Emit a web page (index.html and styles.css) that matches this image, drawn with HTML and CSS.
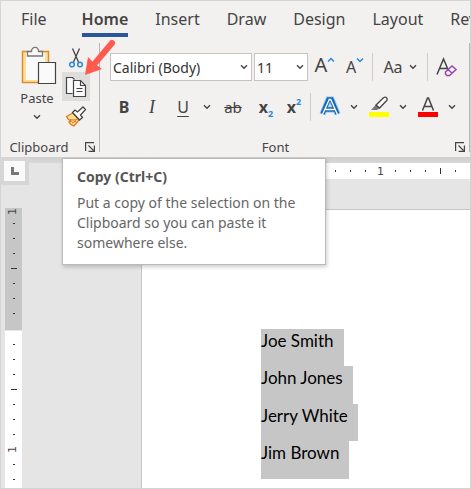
FILE: index.html
```html
<!DOCTYPE html>
<html lang="en">
  <head>
    <meta charset="UTF-8" />
    <meta name="viewport" content="width=device-width, initial-scale=1.0" />
    <title>Document - Word</title>
    <link rel="stylesheet" href="styles.css">
  </head>
  <body>
    <svg class="defs" aria-hidden="true">
      <symbol id="chevron" viewBox="0 0 8 6">
        <path d="M1 1.2 4 4.2 7 1.2" fill="none" stroke="currentColor" stroke-width="1.4" />
      </symbol>
      <symbol id="launcher" viewBox="0 0 10 10">
        <path d="M0.6 9V0.6H9M3.5 3.5l5 5M9.4 3.6v5.8H3.6" fill="none" stroke="#444" stroke-width="1.2" />
      </symbol>
    </svg>

    <div class="window">
      <nav class="tabs">
        <a href="#">File</a>
        <a href="#" class="active">Home</a>
        <a href="#">Insert</a>
        <a href="#">Draw</a>
        <a href="#">Design</a>
        <a href="#">Layout</a>
        <a href="#">Review</a>
      </nav>

      <div class="ribbon">
        <section class="group clipboard">
          <div class="clipboard-tools">
            <button class="paste">
              <svg width="42" height="40" viewBox="-5 0 42 40">
                <path d="M1.5 5.5h26v31h-26z" fill="#fbdf9b" stroke="#e08a2c" stroke-width="1.5" />
                <path d="M5 7h19v27H5z" fill="#fafafa" />
                <path d="M6.5 10V5.5h4c0-5.5 7-5.5 7 0h4V10z" fill="#fafafa" stroke="#777" stroke-width="1.3" />
                <path d="M17.5 16.5h17v21h-17z" fill="#fafafa" stroke="#444" stroke-width="1.2" />
              </svg>
              <span>Paste</span>
              <svg class="chevron" width="8" height="6"><use href="#chevron" /></svg>
            </button>
            <div class="small-tools">
              <button aria-label="Cut">
                <svg width="20" height="22" viewBox="0 0 20 22">
                  <path d="M6.5 1.5 12.5 15M13.5 1.5 7.5 15" fill="none" stroke="#444" stroke-width="1.3" />
                  <circle cx="6" cy="17.5" r="2.3" fill="none" stroke="#2b88d8" stroke-width="1.5" />
                  <circle cx="14" cy="17.5" r="2.3" fill="none" stroke="#2b88d8" stroke-width="1.5" />
                </svg>
              </button>
              <button class="hovered" aria-label="Copy" aria-describedby="copy-tip">
                <svg width="22" height="22" viewBox="0 0 22 22">
                  <path d="M7.5 17.5h-6v-16h6l2 2" fill="#fafafa" stroke="#444" stroke-width="1.2" />
                  <path d="M8.5 4.5h7l5 5v11h-12z" fill="#fafafa" stroke="#444" stroke-width="1.2" />
                  <path d="M15.5 4.5v5h5M11.5 12.5h6M11.5 15.5h6" fill="none" stroke="#444" stroke-width="1.2" />
                </svg>
              </button>
              <button aria-label="Format Painter">
                <svg width="22" height="22" viewBox="0 0 22 22">
                  <path d="M1.5 11.5 8 8l6 7-5 6q-4-1.500-5-4l2-1q-3-1-4.500-4.500z" fill="#fbdf9b" stroke="#e07b12" stroke-width="1.3" />
                  <path d="M5 14.5q4 1 7 0M7 18l4-2" fill="none" stroke="#e07b12" stroke-width="1.2" />
                  <path d="M7.5 7.5 10 5l2.5 2 5.5-5 2.5 2.5-5 5.5 2 2.5-3 2.5z" fill="#fafafa" stroke="#444" stroke-width="1.3" />
                </svg>
              </button>
            </div>
          </div>
          <div class="group-footer">
            <span>Clipboard</span>
            <button class="launcher" aria-label="Clipboard settings"><svg width="10" height="10"><use href="#launcher" /></svg></button>
          </div>
        </section>

        <section class="group font">
          <div class="font-row">
            <label class="combo combo-name">
              <select aria-label="Font"><option>Calibri (Body)</option></select>
              <svg class="chevron" width="8" height="6"><use href="#chevron" /></svg>
            </label>
            <label class="combo combo-size">
              <select aria-label="Font size"><option>11</option></select>
              <svg class="chevron" width="8" height="6"><use href="#chevron" /></svg>
            </label>
            <button class="tool grow" aria-label="Increase Font Size">A<svg width="8" height="6"><path d="M1 4.5 4 1.5 7 4.5" fill="none" stroke="#2b88d8" stroke-width="1.5" /></svg></button>
            <button class="tool shrink" aria-label="Decrease Font Size">A<svg width="8" height="6"><path d="M1 1.5 4 4.5 7 1.5" fill="none" stroke="#2b88d8" stroke-width="1.5" /></svg></button>
            <span class="divider"></span>
            <button class="tool case" aria-label="Change Case">Aa<svg class="chevron" width="8" height="6"><use href="#chevron" /></svg></button>
            <span class="divider"></span>
            <button class="tool clear" aria-label="Clear Formatting">
              <svg width="22" height="22" viewBox="0 0 22 22">
                <path d="M1 18.5 7.5 3 12 13.5M3.5 12.5h8" fill="none" stroke="#444" stroke-width="1.5" />
                <path d="M9.5 16 16 10l4 3.5-6.5 6h-2.5l-1.5-1.5zM12 13.5l4 3.5" fill="#fafafa" stroke="#9b3fae" stroke-width="1.5" />
              </svg>
            </button>
          </div>

          <div class="font-row">
            <button class="tool bold">B</button>
            <button class="tool italic">I</button>
            <button class="tool underline">U</button>
            <button class="drop" aria-label="Underline options"><svg class="chevron" width="8" height="6"><use href="#chevron" /></svg></button>
            <button class="tool strike">ab</button>
            <button class="tool script">x<sub>2</sub></button>
            <button class="tool script">x<sup>2</sup></button>
            <span class="divider"></span>
            <button class="tool effects" aria-label="Text Effects">
              <svg width="22" height="22" viewBox="0 0 22 22">
                <path d="M3.5 18 9.5 3.5h3l6 14.5M6.5 13.5h9" fill="none" stroke="#a5d0f3" stroke-width="6.5" />
                <path d="M3.5 18 9.5 3.5h3l6 14.5M6.5 13.5h9" fill="none" stroke="#1668b3" stroke-width="4.5" />
                <path d="M3.5 18.5 10.3 3.5h1.4l6.8 15M6.5 13.5h9" fill="none" stroke="#fff" stroke-width="1.3" />
              </svg>
            </button>
            <button class="drop" aria-label="Text Effects options"><svg class="chevron" width="8" height="6"><use href="#chevron" /></svg></button>
            <button class="tool color" aria-label="Text Highlight Color">
              <svg width="20" height="22" viewBox="0 0 20 22">
                <path d="M2 14 7 8.5l4 3.5-3 2z" fill="#777" />
                <path d="M7 9 14.5 1.7q2-1.2 3 0 1.3 1.5 0 3L10.5 12z" fill="#fafafa" stroke="#444" stroke-width="1.3" />
                <path d="M0 16h20v5H0z" fill="#ff0" />
              </svg>
            </button>
            <button class="drop" aria-label="Highlight options"><svg class="chevron" width="8" height="6"><use href="#chevron" /></svg></button>
            <button class="tool color" aria-label="Font Color">
              <svg width="20" height="22" viewBox="0 0 20 22">
                <path d="M4.5 14.5 9.5 2h1l5 12.5M6.5 10.5h7" fill="none" stroke="#444" stroke-width="1.5" />
                <path d="M0 16h20v5H0z" fill="#f00" />
              </svg>
            </button>
            <button class="drop" aria-label="Font Color options"><svg class="chevron" width="8" height="6"><use href="#chevron" /></svg></button>
          </div>

          <div class="group-footer">
            <span>Font</span>
            <button class="launcher" aria-label="Font settings"><svg width="10" height="10"><use href="#launcher" /></svg></button>
          </div>
        </section>
      </div>

      <main class="workspace">
        <div class="side">
          <button class="tab-selector" aria-label="Tab selector">
            <svg width="8" height="8"><path d="M1.5 0v6.5H8" fill="none" stroke="#777" stroke-width="3" /></svg>
          </button>
          <div class="ruler-v">
            <div class="ruler-margin">
              <b>1</b><i></i><i></i><i></i><i class="half"></i><i></i><i></i><i></i>
            </div>
            <div class="ruler-body">
              <i></i><i></i><i></i><i class="half"></i><i></i><i></i><i></i><b>1</b><i></i><i></i>
            </div>
          </div>
        </div>

        <div class="canvas">
          <div class="ruler-h">
            <i></i><i></i><i></i><i class="half"></i><i></i><i></i><i></i><b>1</b><i></i><i></i><i></i><i class="half"></i><i></i>
          </div>
          <article class="page">
            <p><span>Joe Smith</span></p>
            <p><span>John Jones</span></p>
            <p><span>Jerry White</span></p>
            <p><span>Jim Brown</span></p>
          </article>
        </div>
      </main>

      <div class="tooltip" id="copy-tip" role="tooltip">
        <h2>Copy (Ctrl+C)</h2>
        <p>Put a copy of the selection on the Clipboard so you can paste it somewhere else.</p>
      </div>

      <svg class="pointer" width="32" height="38" viewBox="0 0 32 38" aria-hidden="true">
        <path d="M28 4 12 23" stroke="#ff5a4d" stroke-width="6" stroke-linecap="round" />
        <path d="M1 36 4 18 8 22l6 5 4 3z" fill="#ff5a4d" />
      </svg>
    </div>
  </body>
</html>
```
FILE: styles.css
```css
* {
  box-sizing: border-box;
}
body {
  margin: 0;
  font-family: "Noto Sans", "Open Sans", sans-serif;
  color: #444;
}
button {
  display: flex;
  align-items: center;
  justify-content: center;
  padding: 0;
  border: none;
  background: none;
  font: inherit;
  color: inherit;
}
svg {
  display: block;
  flex: none;
}
.defs {
  position: absolute;
  width: 0;
  height: 0;
}
.chevron {
  color: #444;
}
.window {
  position: relative;
  display: flex;
  flex-direction: column;
  min-height: 100vh;
  border: 1px solid #d6d4d4;
  overflow: hidden;
  background: #e5e5e5;
}

/* Tabs */
.tabs {
  display: flex;
  gap: 27px;
  height: 42px;
  padding: 6px 0 6px 20px;
  background: #f3f1f0;
  overflow: hidden;
}
.tabs a {
  flex: none;
  line-height: 25px;
  font-size: 16px;
  color: #444;
  text-decoration: none;
  border-bottom: 4px solid transparent;
}
.tabs .active {
  margin-left: 8px;
  font-weight: 600;
  border-color: #2b579a;
}

/* Ribbon */
.ribbon {
  display: flex;
  height: 114px;
  padding-bottom: 5px;
  background: #f3f1f0;
}
.group {
  display: flex;
  flex-direction: column;
  border-right: 1px solid #b8b6b5;
}
.clipboard {
  width: 99px;
}
.font {
  flex: 1;
  padding: 10px 0 0 10px;
}
.clipboard-tools {
  display: flex;
  flex: 1;
  padding-left: 15px;
}
.paste {
  flex-direction: column;
  justify-content: flex-start;
  width: 42px;
  margin-right: 4px;
  padding-top: 3px;
  font-size: 13px;
}
.paste span {
  line-height: 24px;
}
.paste .chevron {
  margin-top: 4px;
}
.small-tools button {
  width: 28px;
  height: 29px;
}
.small-tools .hovered {
  background: #dfdddc;
}
.group-footer {
  display: flex;
  align-items: center;
  height: 10px;
  margin-top: auto;
  font-size: 13px;
}
.group-footer span {
  flex: 1;
  text-align: center;
}
.clipboard .group-footer {
  padding-right: 4px;
}
.clipboard .group-footer span {
  padding-right: 8px;
}
.font .group-footer {
  padding-right: 4px;
}
.font .group-footer span {
  padding-right: 14px;
}

/* Font group */
.font-row {
  display: flex;
  align-items: center;
  height: 28px;
  margin-bottom: 12px;
}
.combo {
  display: flex;
  align-items: center;
  height: 28px;
  margin-right: 2px;
  padding-right: 3px;
  border: 1px solid #c6c4c3;
  background: #fff;
}
.combo-name {
  width: 142px;
}
.combo-size {
  width: 54px;
}
.combo select {
  appearance: none;
  flex: 1;
  min-width: 0;
  padding: 0 0 0 2px;
  border: none;
  background: none;
  font: 14px "Noto Sans", "Open Sans", sans-serif;
  color: #333;
}
.tool {
  width: 28px;
  height: 28px;
  font-size: 16px;
}
.drop {
  width: 14px;
  height: 28px;
}
.divider {
  width: 1px;
  height: 28px;
  margin: 0 2px;
  background: #cfcdcc;
}
.grow,
.shrink {
  width: 30px;
  align-items: flex-start;
  line-height: 24px;
}
.grow {
  font-size: 20px;
}
.shrink {
  font-size: 16px;
  line-height: 28px;
}
.grow svg,
.shrink svg {
  margin-top: 4px;
}
.case {
  width: 50px;
  gap: 6px;
}
.clear {
  width: 34px;
}
.bold {
  font-weight: 700;
}
.italic {
  font-family: "Liberation Serif", serif;
  font-style: italic;
  font-size: 18px;
}
.underline {
  width: 34px;
  text-decoration: underline;
  text-underline-offset: 3px;
}
.strike {
  width: 38px;
  font-size: 15px;
  text-decoration: line-through;
}
.script {
  font-weight: 700;
}
.script sub,
.script sup {
  font-size: 9px;
  line-height: 9px;
  color: #2b88d8;
}
.script sub {
  margin-top: 12px;
}
.script sup {
  margin-bottom: 12px;
}
.effects {
  width: 34px;
}
.color {
  width: 35px;
}

/* Document area */
.workspace {
  display: flex;
  flex: 1;
  background: linear-gradient(#cecece, #d8d8d8 6px, transparent 6px);
}
.side {
  display: flex;
  flex-direction: column;
  width: 140px;
}
.tab-selector {
  width: 28px;
  height: 28px;
  border: 4px solid #d6d6d6;
  border-left-width: 3px;
  background: #fafafa;
}
.ruler-v {
  display: flex;
  flex: 1;
  flex-direction: column;
  width: 17px;
  margin: 23px 0 0 4px;
}
.ruler-margin {
  height: 123px;
  border-bottom: 1px solid #e5e5e5;
  background: #c6c6c6;
}
.ruler-body {
  flex: 1;
  padding-top: 6px;
  background: #fff;
}
.ruler-v i,
.ruler-v b {
  display: flex;
  align-items: center;
  justify-content: center;
  height: 15px;
}
.ruler-v b {
  writing-mode: vertical-rl;
  transform: rotate(180deg);
}
.ruler-margin b {
  height: 8px;
}
.ruler-v i::before {
  content: "";
  width: 2px;
  height: 1px;
  background: #333;
}
.ruler-v .half::before {
  width: 6px;
}
.ruler-v b,
.ruler-h b {
  font-family: "DejaVu Sans", sans-serif;
  font-size: 11px;
  font-weight: 400;
  line-height: 15px;
}
.canvas {
  display: flex;
  flex: 1;
  flex-direction: column;
  min-width: 0;
}
.ruler-h {
  display: flex;
  align-items: center;
  height: 16px;
  margin: 6px 0 30px 120px;
  padding-left: 7px;
  background: #fff;
  overflow: hidden;
}
.ruler-h i,
.ruler-h b {
  display: flex;
  flex: none;
  justify-content: center;
  width: 15px;
}
.ruler-h i::before {
  content: "";
  width: 1px;
  height: 2px;
  background: #333;
}
.ruler-h .half::before {
  height: 6px;
}
.page {
  flex: 1;
  padding: 119px 0 8px 119px;
  border-top: 1px solid #c6c6c6;
  border-left: 1px solid #c6c6c6;
  background: #fff;
  font-family: Lato, sans-serif;
  font-size: 17px;
  color: #000;
}
.page p {
  display: flex;
  margin: 0;
}
.page span {
  padding: 0 10px 13px 0;
  line-height: 24px;
  background: #c6c6c6;
}
.page p:nth-child(even) span {
  padding-bottom: 14px;
}

/* Overlays */
.tooltip {
  position: absolute;
  top: 157px;
  left: 61px;
  width: 264px;
  padding: 8px 10px 11px 14px;
  border: 1px solid #bababa;
  background: #fff;
  box-shadow: 1px 2px 4px rgba(0, 0, 0, 0.2);
  font-size: 14px;
  line-height: 20px;
  color: #666;
}
.tooltip h2 {
  margin: 0 0 6px;
  font-size: 14px;
  color: #555;
}
.tooltip p {
  margin: 0;
}
.pointer {
  position: absolute;
  top: 38px;
  left: 83px;
}
```
